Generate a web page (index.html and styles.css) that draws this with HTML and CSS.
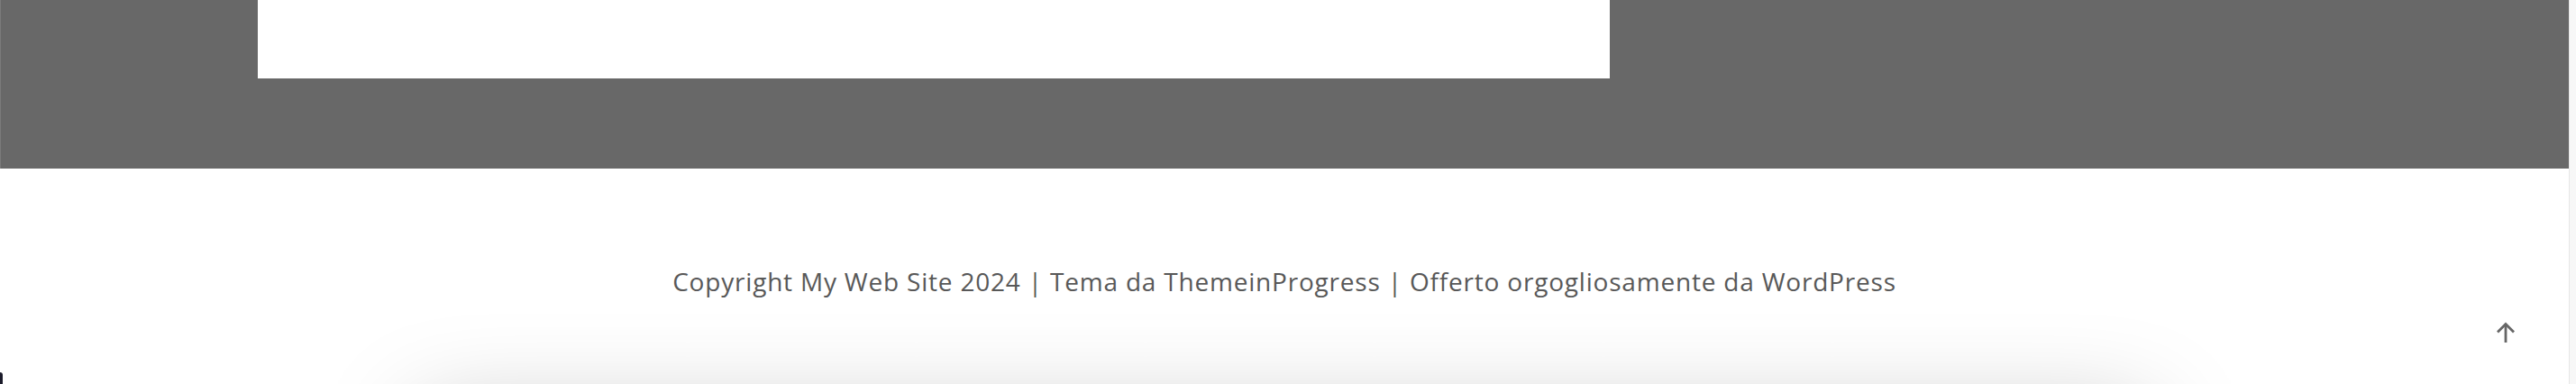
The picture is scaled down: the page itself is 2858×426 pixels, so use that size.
FILE: index.html
```html
<!DOCTYPE html>
<html lang="it">
<head>
<meta charset="utf-8">
<title>My Web Site</title>
<link rel="stylesheet" href="styles.css">
</head>
<body>
<div class="viewport">
  <div class="page">
    <section class="band">
      <div class="container">
        <div class="card"></div>
      </div>
    </section>
    <footer class="footer">
      <p class="copyright">Copyright My Web Site 2024 | Tema da ThemeinProgress | Offerto orgogliosamente da WordPress</p>
      <a class="totop" href="#" aria-label="Torna su">
        <svg width="20" height="24" viewBox="0 0 20 24" fill="none" stroke="#666666" stroke-width="2.8" stroke-linecap="butt" stroke-linejoin="miter">
          <path d="M10 2.5 V23"/>
          <path d="M1 11.5 L10 2.5 L19 11.5"/>
        </svg>
      </a>
    </footer>
    <div class="below">
      <div class="panel"></div>
    </div>
    <span class="corner"></span>
  </div>
  <div class="scrollbar"></div>
</div>
</body>
</html>
```
FILE: styles.css
```css
html, body {
  margin: 0;
  padding: 0;
  height: 426px;
  overflow: hidden;
  background: #ffffff;
}
.viewport {
  display: flex;
  height: 426px;
  overflow: hidden;
}
.page {
  flex: 1;
  position: relative;
  display: flex;
  flex-direction: column;
}
.band {
  background: #686868;
  height: 187px;
  flex: none;
  border-left: 1px solid #7a7a7a;
}
.container {
  width: 2280px;
  margin: 0 auto;
}
.card {
  width: 1500px;
  height: 87px;
  background: #ffffff;
}
.footer {
  position: relative;
  height: 239px;
  flex: none;
  padding-top: 106px;
  box-sizing: border-box;
  z-index: 1;
}
.copyright {
  margin: 0;
  text-align: center;
  font-family: "Open Sans", "Liberation Sans", sans-serif;
  font-size: 28px;
  line-height: 38px;
  letter-spacing: 0.8px;
  color: #585858;
}
.totop {
  position: absolute;
  top: 170px;
  right: 60px;
  display: block;
  width: 20px;
  height: 24px;
}
.totop svg {
  display: block;
}
.below {
  flex: none;
  padding: 36px 0 0;
  display: flex;
  justify-content: center;
}
.panel {
  width: 1920px;
  height: 300px;
  background: #ffffff;
  box-shadow: 0 0 110px rgba(0, 0, 0, 0.26);
}
.corner {
  position: absolute;
  left: 0;
  top: 413px;
  width: 3px;
  height: 13px;
  background: #1b1b2a;
  border-top-right-radius: 3px;
  z-index: 2;
}
.scrollbar {
  flex: none;
  width: 7px;
  border-left: 1px solid #e6e6e6;
  background: #f7f7f7;
}
```
